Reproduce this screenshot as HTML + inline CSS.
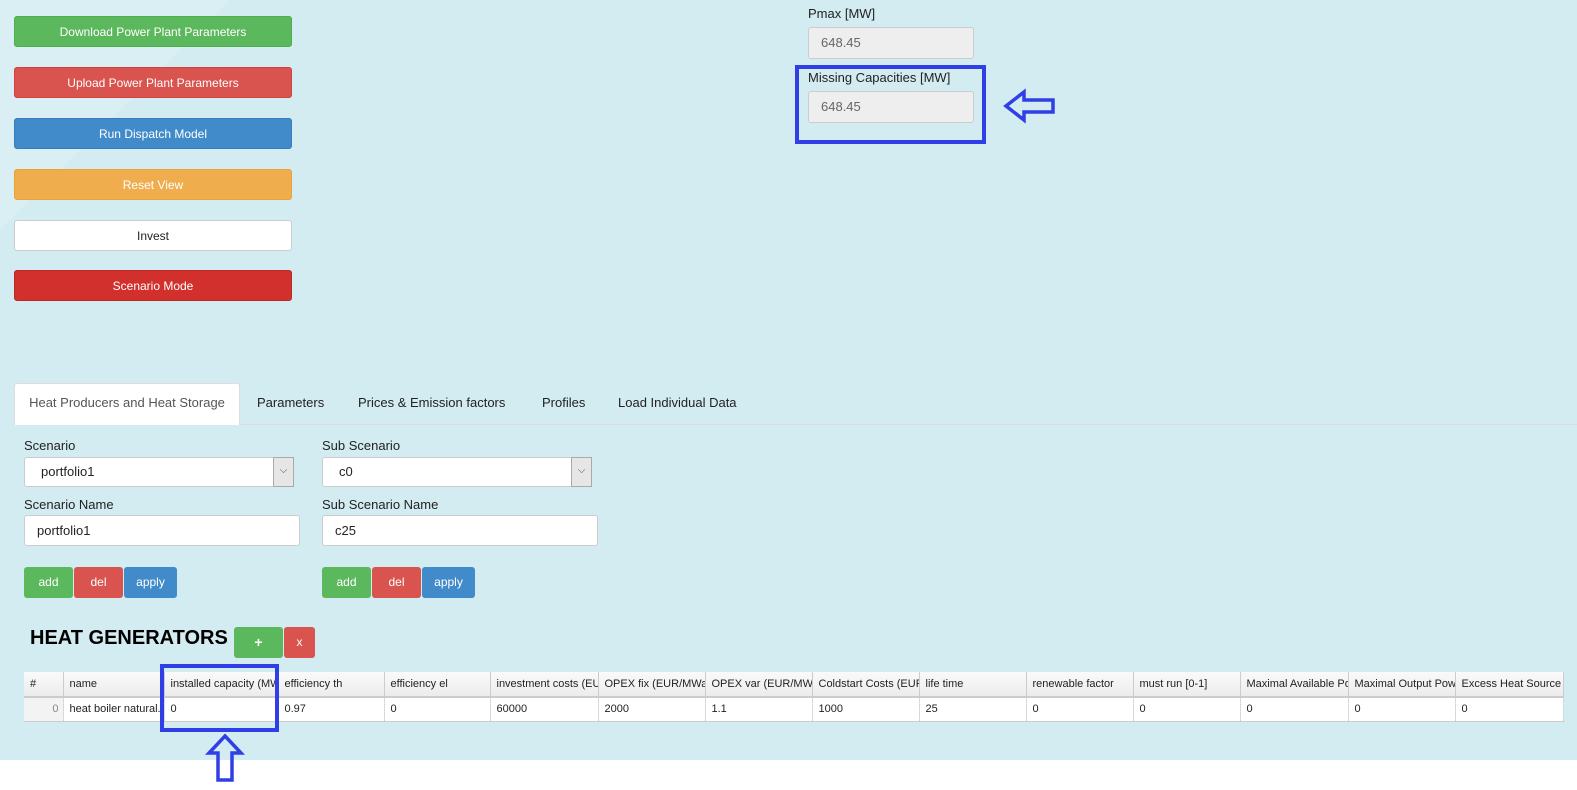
<!DOCTYPE html>
<html><head><meta charset="utf-8"><style>
*{box-sizing:border-box;margin:0;padding:0}
body{width:1577px;height:790px;background:#fff;font-family:"Liberation Sans",sans-serif;position:relative;overflow:hidden}
#bg{position:absolute;left:0;top:0;width:1577px;height:760px;background:#d3ecf1}
#diag{position:absolute;left:0;top:0;width:230px;height:230px;background:linear-gradient(135deg,#daeff4 50%,transparent 50%)}
.a{position:absolute}
.btn{position:absolute;left:14px;width:278px;height:31px;border-radius:3px;color:#fff;font-size:12px;text-align:center;line-height:30px}
.lbl{position:absolute;font-size:13px;color:#222}
.inp{position:absolute;background:#fff;border:1px solid #ccc;border-radius:3px;font-size:13px;color:#222;padding-left:12px;line-height:30px}
.sb{position:absolute;height:31px;color:#fff;font-size:12px;text-align:center;line-height:30px;border-radius:3px}
table{position:absolute;left:24px;top:672px;width:1539px;border-collapse:collapse;font-size:11px;color:#222;table-layout:fixed}
td{border-right:1px solid #ccc;white-space:nowrap;overflow:hidden;padding-left:6px}
tr.h td{height:25px;background:linear-gradient(#fafafa,#ececec);border-bottom:2px solid #ccc}
tr.r td{height:24px;background:#fff;border-right:1px dotted #ccc;border-bottom:1px solid #ccc}
</style></head><body>
<div id="bg"></div><div id="diag"></div>
<div class="btn" style="top:16px;background:#5cb85c;border:1px solid #4cae4c">Download Power Plant Parameters</div>
<div class="btn" style="top:67px;background:#d9534f;border:1px solid #d43f3a">Upload Power Plant Parameters</div>
<div class="btn" style="top:118px;background:#428bca;border:1px solid #357ebd">Run Dispatch Model</div>
<div class="btn" style="top:169px;background:#f0ad4e;border:1px solid #eea236">Reset View</div>
<div class="btn" style="top:220px;background:#fff;border:1px solid #ccc;color:#222">Invest</div>
<div class="btn" style="top:270px;background:#d2302c;border:1px solid #b52b27">Scenario Mode</div>

<div class="lbl" style="left:808px;top:6px">Pmax [MW]</div>
<div class="inp" style="left:808px;top:27px;width:166px;height:32px;background:#eee;color:#666">648.45</div>
<div class="lbl" style="left:808px;top:70px">Missing Capacities [MW]</div>
<div class="inp" style="left:808px;top:91px;width:166px;height:32px;background:#eee;color:#666">648.45</div>
<div class="a" style="left:795px;top:65px;width:191px;height:79px;border:4px solid #2f3ee6"></div>
<svg class="a" style="left:1000px;top:86px" width="60" height="40"><path d="M6 20 L24 6 L24 14 L53 14 L53 26 L24 26 L24 34 Z" fill="none" stroke="#2f3ee6" stroke-width="3.5"/></svg>

<div class="a" style="left:14px;top:424px;width:1563px;height:1px;background:#ddd"></div>
<div class="a" style="left:14px;top:383px;width:226px;height:42px;background:#fff;border:1px solid #ddd;border-bottom:none;border-radius:3px 3px 0 0;font-size:13px;color:#555;line-height:38px;text-align:center">Heat Producers and Heat Storage</div>
<div class="lbl" style="left:257px;top:395px">Parameters</div>
<div class="lbl" style="left:358px;top:395px">Prices &amp; Emission factors</div>
<div class="lbl" style="left:542px;top:395px">Profiles</div>
<div class="lbl" style="left:618px;top:395px">Load Individual Data</div>

<div class="lbl" style="left:24px;top:438px">Scenario</div>
<div class="inp" style="left:24px;top:457px;width:270px;height:30px;line-height:28px;padding-left:16px">portfolio1</div>
<div class="a" style="left:273px;top:457px;width:21px;height:30px;background:#e6e6e6;border:1px solid #aaa;font-size:10px;text-align:center;line-height:26px;color:#555">⌵</div>
<div class="lbl" style="left:322px;top:438px">Sub Scenario</div>
<div class="inp" style="left:322px;top:457px;width:270px;height:30px;line-height:28px;padding-left:16px">c0</div>
<div class="a" style="left:571px;top:457px;width:21px;height:30px;background:#e6e6e6;border:1px solid #aaa;font-size:10px;text-align:center;line-height:26px;color:#555">⌵</div>
<div class="lbl" style="left:24px;top:497px">Scenario Name</div>
<div class="inp" style="left:24px;top:515px;width:276px;height:31px;line-height:29px">portfolio1</div>
<div class="lbl" style="left:322px;top:497px">Sub Scenario Name</div>
<div class="inp" style="left:322px;top:515px;width:276px;height:31px;line-height:29px">c25</div>

<div class="sb" style="left:24px;top:567px;width:49px;background:#5cb85c">add</div>
<div class="sb" style="left:74px;top:567px;width:49px;background:#d9534f">del</div>
<div class="sb" style="left:124px;top:567px;width:53px;background:#428bca">apply</div>
<div class="sb" style="left:322px;top:567px;width:49px;background:#5cb85c">add</div>
<div class="sb" style="left:372px;top:567px;width:49px;background:#d9534f">del</div>
<div class="sb" style="left:422px;top:567px;width:53px;background:#428bca">apply</div>

<div class="a" style="left:30px;top:627px;font-size:20px;font-weight:bold;color:#000">HEAT GENERATORS</div>
<div class="sb" style="left:234px;top:627px;width:49px;background:#5cb85c;font-weight:bold;font-size:14px">+</div>
<div class="sb" style="left:284px;top:627px;width:31px;background:#d9534f">x</div>

<table>
<colgroup><col style="width:39px"><col style="width:101px"><col style="width:114px"><col style="width:106px"><col style="width:106px"><col style="width:108px"><col style="width:107px"><col style="width:107px"><col style="width:107px"><col style="width:107px"><col style="width:107px"><col style="width:107px"><col style="width:108px"><col style="width:107px"><col style="width:108px"></colgroup>
<tr class="h"><td>#</td><td>name</td><td>installed capacity (MW)</td><td>efficiency th</td><td>efficiency el</td><td>investment costs (EUR)</td><td>OPEX fix (EUR/MWa)</td><td>OPEX var (EUR/MWh)</td><td>Coldstart Costs (EUR)</td><td>life time</td><td>renewable factor</td><td>must run [0-1]</td><td>Maximal Available Pot</td><td>Maximal Output Power</td><td>Excess Heat Source</td></tr>
<tr class="r"><td style="text-align:right;padding-right:4px;color:#888;background:#f3f3f3">0</td><td>heat boiler natural...</td><td>0</td><td>0.97</td><td>0</td><td>60000</td><td>2000</td><td>1.1</td><td>1000</td><td>25</td><td>0</td><td>0</td><td>0</td><td>0</td><td>0</td></tr>
</table>
<div class="a" style="left:160px;top:664px;width:119px;height:68px;border:4px solid #2f3ee6"></div>
<svg class="a" style="left:200px;top:733px" width="50" height="50"><path d="M25 3 L41 20 L32 20 L32 47 L18 47 L18 20 L9 20 Z" fill="none" stroke="#2f3ee6" stroke-width="3.5"/></svg>
</body></html>
